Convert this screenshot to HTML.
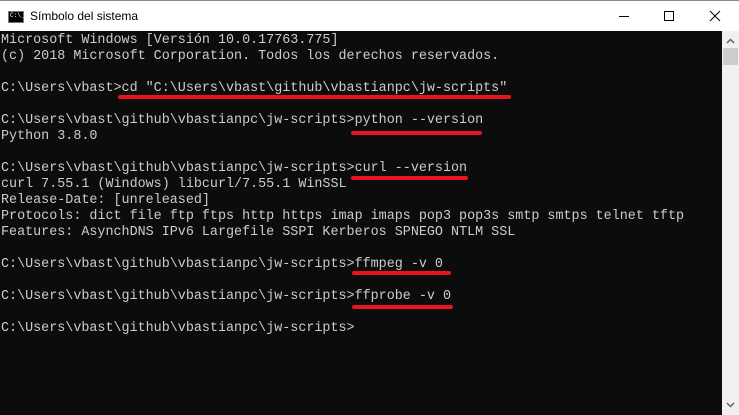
<!DOCTYPE html>
<html><head><meta charset="utf-8"><style>
body{margin:0;width:739px;height:415px;overflow:hidden;background:#0c0c0c;position:relative;font-family:"Liberation Sans",sans-serif}
.tb{position:absolute;left:0;top:0;width:739px;height:31px;background:#fff;border-top:1px solid #888;box-sizing:border-box}
.tb .t{position:absolute;left:30px;top:8px;font-size:12px;color:#000}
.ic{position:absolute;left:8px;top:10px;width:14px;height:10px;background:#000;border:1px solid #777}
.ic span{position:absolute;left:1px;top:0;color:#fff;font:6px "Liberation Mono",monospace}
pre{position:absolute;left:1px;top:33px;margin:0;font:13.4px/16px "Liberation Mono",monospace;color:#cccccc}
.u{position:absolute;height:4px;background:#e8141e;border-radius:2px}
.sb{position:absolute;left:722px;top:31px;width:17px;height:384px;background:#f0f0f0}
.th{position:absolute;left:723px;top:48px;width:15px;height:17px;background:#cdcdcd}
</style></head><body>
<div class="tb"><div class="ic"><span>C:\_</span></div><div class="t">Símbolo del sistema</div>
<svg style="position:absolute;left:580px;top:0" width="159" height="31"><path d="M39 15.5h10" stroke="#000"/><rect x="84.5" y="10.5" width="9" height="9" fill="none" stroke="#000"/><path d="M130 10l10 10M140 10l-10 10" stroke="#000"/></svg></div>
<pre>Microsoft Windows [Versión 10.0.17763.775]
(c) 2018 Microsoft Corporation. Todos los derechos reservados.

C:\Users\vbast&gt;cd "C:\Users\vbast\github\vbastianpc\jw-scripts"

C:\Users\vbast\github\vbastianpc\jw-scripts&gt;python --version
Python 3.8.0

C:\Users\vbast\github\vbastianpc\jw-scripts&gt;curl --version
curl 7.55.1 (Windows) libcurl/7.55.1 WinSSL
Release-Date: [unreleased]
Protocols: dict file ftp ftps http https imap imaps pop3 pop3s smtp smtps telnet tftp
Features: AsynchDNS IPv6 Largefile SSPI Kerberos SPNEGO NTLM SSL

C:\Users\vbast\github\vbastianpc\jw-scripts&gt;ffmpeg -v 0

C:\Users\vbast\github\vbastianpc\jw-scripts&gt;ffprobe -v 0

C:\Users\vbast\github\vbastianpc\jw-scripts&gt;</pre>
<div class="u" style="left:118px;top:95px;width:393px"></div>
<div class="u" style="left:351px;top:131px;width:131px"></div>
<div class="u" style="left:351px;top:176px;width:117px"></div>
<div class="u" style="left:352px;top:271px;width:99px"></div>
<div class="u" style="left:352px;top:305px;width:101px"></div>
<div class="sb"></div><div class="th"></div>
<svg style="position:absolute;left:722px;top:31px" width="17" height="384"><path d="M5 12l3.5-3.5 3.5 3.5" stroke="#606060" stroke-width="1.5" fill="none"/><path d="M5 372l3.5 3.5 3.5-3.5" stroke="#606060" stroke-width="1.5" fill="none"/></svg>
</body></html>
